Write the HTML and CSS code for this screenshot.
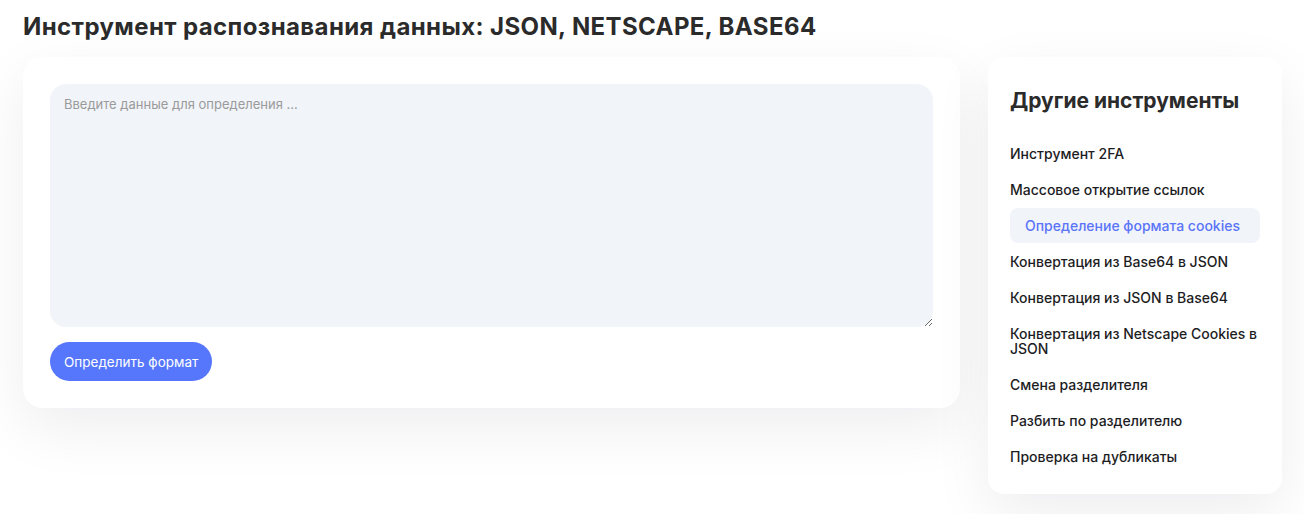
FILE: index.html
```html
<!DOCTYPE html>
<html>
<head>
    <title>Определение формата cookies</title>
    <link rel="stylesheet" href="styles.css">
</head>
<body>
    <div class="page">
        <h1>Инструмент распознавания данных: JSON, NETSCAPE, BASE64</h1>

        <div class="layout">
            <div class="card">
                <textarea id="dataInput" placeholder="Введите данные для определения ..."></textarea>
                <button class="detect-btn">Определить формат</button>
            </div>

            <div class="sidebar">
                <h2>Другие инструменты</h2>
                <ul class="tools">
                    <li><a href="#">Инструмент 2FA</a></li>
                    <li><a href="#">Массовое открытие ссылок</a></li>
                    <li><a href="#" class="active">Определение формата cookies</a></li>
                    <li><a href="#">Конвертация из Base64 в JSON</a></li>
                    <li><a href="#">Конвертация из JSON в Base64</a></li>
                    <li><a href="#">Конвертация из Netscape Cookies в JSON</a></li>
                    <li><a href="#">Смена разделителя</a></li>
                    <li><a href="#">Разбить по разделителю</a></li>
                    <li><a href="#">Проверка на дубликаты</a></li>
                </ul>
            </div>
        </div>
    </div>
</body>
</html>
```

FILE: styles.css
```css
* {
    margin: 0;
    padding: 0;
    box-sizing: border-box;
}

body {
    font-family: Inter, "Noto Sans", sans-serif;
    background: #fff;
    color: #1d1d1f;
}

.page {
    padding: 12px 22px 20px 23px;
}

h1 {
    font-size: 24px;
    line-height: 30px;
    font-weight: 700;
    letter-spacing: 0.4px;
    color: #2b2b2b;
    margin-bottom: 15px;
}

.layout {
    display: flex;
    gap: 28px;
    align-items: flex-start;
}

.card {
    width: 937px;
    background: #fff;
    border-radius: 20px;
    padding: 27px;
    box-shadow: 0 20px 60px rgba(20, 20, 40, 0.07);
}

textarea {
    display: block;
    width: 100%;
    height: 243px;
    border: none;
    outline: none;
    background: #f1f4f9;
    border-radius: 16px;
    padding: 12px 14px;
    font-family: inherit;
    font-size: 13px;
    color: #1d1d1f;
}

textarea::placeholder {
    color: #9a9a9a;
}

.detect-btn {
    margin-top: 15px;
    height: 39px;
    padding: 0 14px;
    border: none;
    border-radius: 20px;
    background: #5677fc;
    color: #fff;
    font-family: inherit;
    font-size: 13.5px;
    cursor: pointer;
}

.sidebar {
    width: 294px;
    background: #fff;
    border-radius: 16px;
    padding: 32px 22px 20px;
    box-shadow: 0 20px 60px rgba(20, 20, 40, 0.07);
}

h2 {
    font-size: 21px;
    line-height: 24px;
    font-weight: 700;
    color: #2b2b2b;
    margin-bottom: 23px;
}

.tools {
    list-style: none;
    display: flex;
    flex-direction: column;
    gap: 1px;
}

.tools a {
    display: block;
    padding: 10px 0;
    font-size: 14px;
    line-height: 15px;
    font-weight: 500;
    color: #1d1d1f;
    text-decoration: none;
}

.tools a.active {
    padding: 10px 15px;
    background: #f1f4f9;
    border-radius: 8px;
    color: #5b74f8;
}
```
